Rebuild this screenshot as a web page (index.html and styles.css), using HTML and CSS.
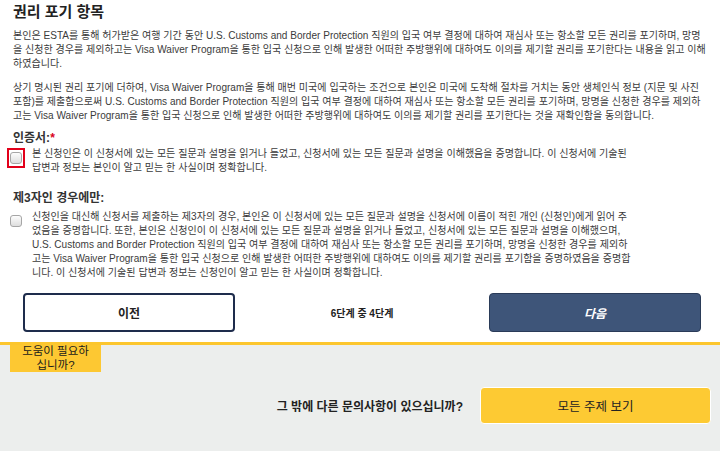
FILE: index.html
```html
<!DOCTYPE html>
<html lang="ko">
<head>
    <meta charset="UTF-8">
    <meta name="viewport" content="width=device-width, initial-scale=1.0">
    <title>권리 포기 항목</title>
    <link rel="stylesheet" href="styles.css">
</head>
<body>

<section class="waiver">
    <h2>권리 포기 항목</h2>
    <p>본인은 ESTA를 통해 허가받은 여행 기간 동안 U.S. Customs and Border Protection 직원의 입국 여부 결정에 대하여 재심사 또는 항소할 모든 권리를 포기하며, 망명을 신청한 경우를 제외하고는 Visa Waiver Program을 통한 입국 신청으로 인해 발생한 어떠한 주방행위에 대하여도 이의를 제기할 권리를 포기한다는 내용을 읽고 이해하였습니다.</p>
    <p>상기 명시된 권리 포기에 더하여, Visa Waiver Program을 통해 매번 미국에 입국하는 조건으로 본인은 미국에 도착해 절차를 거치는 동안 생체인식 정보 (지문 및 사진 포함)를 제출함으로써 U.S. Customs and Border Protection 직원의 입국 여부 결정에 대하여 재심사 또는 항소할 모든 권리를 포기하며, 망명을 신청한 경우를 제외하고는 Visa Waiver Program을 통한 입국 신청으로 인해 발생한 어떠한 주방행위에 대하여도 이의를 제기할 권리를 포기한다는 것을 재확인함을 동의합니다.</p>

    <div class="field field-first">
        <h3>인증서:<span class="req">*</span></h3>
        <label class="check">
            <span class="check-box error"><input type="checkbox"></span>
            <span class="check-text">본 신청인은 이 신청서에 있는 모든 질문과 설명을 읽거나 들었고, 신청서에 있는 모든 질문과 설명을 이해했음을 증명합니다. 이 신청서에 기술된 답변과 정보는 본인이 알고 믿는 한 사실이며 정확합니다.</span>
        </label>
    </div>

    <div class="field">
        <h3>제3자인 경우에만:</h3>
        <label class="check">
            <span class="check-box"><input type="checkbox"></span>
            <span class="check-text">신청인을 대신해 신청서를 제출하는 제3자의 경우, 본인은 이 신청서에 있는 모든 질문과 설명을 신청서에 이름이 적힌 개인 (신청인)에게 읽어 주었음을 증명합니다. 또한, 본인은 신청인이 이 신청서에 있는 모든 질문과 설명을 읽거나 들었고, 신청서에 있는 모든 질문과 설명을 이해했으며, U.S. Customs and Border Protection 직원의 입국 여부 결정에 대하여 재심사 또는 항소할 모든 권리를 포기하며, 망명을 신청한 경우를 제외하고는 Visa Waiver Program을 통한 입국 신청으로 인해 발생한 어떠한 주방행위에 대하여도 이의를 제기할 권리를 포기함을 증명하였음을 증명합니다. 이 신청서에 기술된 답변과 정보는 신청인이 알고 믿는 한 사실이며 정확합니다.</span>
        </label>
    </div>

    <div class="steps">
        <button class="btn-prev">이전</button>
        <span class="step-count">6단계 중 4단계</span>
        <button class="btn-next">다음</button>
    </div>
</section>

<footer class="help">
    <div class="help-tab">도움이 필요하<br>십니까?</div>
    <div class="help-row">
        <span class="help-question">그 밖에 다른 문의사항이 있으십니까?</span>
        <button class="btn-topics">모든 주제 보기</button>
    </div>
</footer>

</body>
</html>
```

FILE: styles.css
```css
body {
    font-family: 'Liberation Sans', 'Noto Sans CJK KR', sans-serif;
    margin: 0;
    padding: 0;
    background-color: #fff;
    color: #3b3b3b;
}
.waiver {
    padding: 2px 13px 10px 13px;
}
.waiver h2 {
    margin: 0 0 7px;
    font-size: 15px;
    font-weight: 700;
    color: #222;
    line-height: 20px;
}
.waiver p {
    margin: 0;
    font-size: 10.05px;
    line-height: 14px;
}
.waiver p + p {
    margin-top: 10px;
}
.field {
    margin-top: 15px;
}
.field h3 {
    margin: 0 0 4px;
    font-size: 12px;
    font-weight: 700;
    color: #333;
    line-height: 16px;
}
.field-first {
    margin-top: 7px;
}
.field-first h3 {
    margin-bottom: 1px;
}
.req {
    color: #d9001b;
}
.check {
    display: flex;
    align-items: flex-start;
    gap: 7px;
    margin-left: -6px;
    font-size: 10.05px;
    line-height: 14px;
}
.check-text {
    flex: 0 1 603px;
}
.check-box {
    flex: 0 0 auto;
    width: 14px;
    height: 16px;
    margin-top: 1px;
    border: 2px solid transparent;
    display: flex;
    align-items: center;
    justify-content: center;
}
.check-box.error {
    border-color: #e2001a;
}
.check-box input {
    appearance: none;
    margin: 0;
    width: 12px;
    height: 12px;
    border: 1px solid #a6a6a6;
    border-radius: 3px;
    background: linear-gradient(#fdfdfd, #dedede);
}
.steps {
    display: grid;
    grid-template-columns: 212px 1fr 212px;
    align-items: center;
    margin: 13px 6px 0 10px;
}
.steps button {
    height: 39px;
    border-radius: 4px;
    font-family: inherit;
    font-size: 12px;
    font-weight: 700;
    cursor: pointer;
}
.btn-prev {
    background: #fff;
    border: 2px solid #1e2c4c;
    color: #222;
}
.btn-next {
    background: #3e5579;
    border: 1px solid #2a3b58;
    color: #fff;
    font-style: italic;
}
.step-count {
    text-align: center;
    font-size: 10px;
    font-weight: 700;
    color: #222;
}
.help {
    background: #eceeed;
    border-top: 3px solid #fcc62e;
    padding: 0 9px 30px 10px;
}
.help-tab {
    width: 91px;
    background: #fdc832;
    color: #1a1a1a;
    font-size: 11.5px;
    line-height: 13.5px;
    text-align: center;
}
.help-row {
    display: flex;
    justify-content: flex-end;
    align-items: center;
    gap: 17px;
    margin-top: 15px;
}
.help-question {
    font-size: 12px;
    font-weight: 700;
    color: #222;
}
.btn-topics {
    width: 231px;
    height: 37px;
    background: #fdca33;
    border: 1px solid #fff;
    border-radius: 4px;
    font-family: inherit;
    font-size: 12.5px;
    color: #222;
    cursor: pointer;
}
```
